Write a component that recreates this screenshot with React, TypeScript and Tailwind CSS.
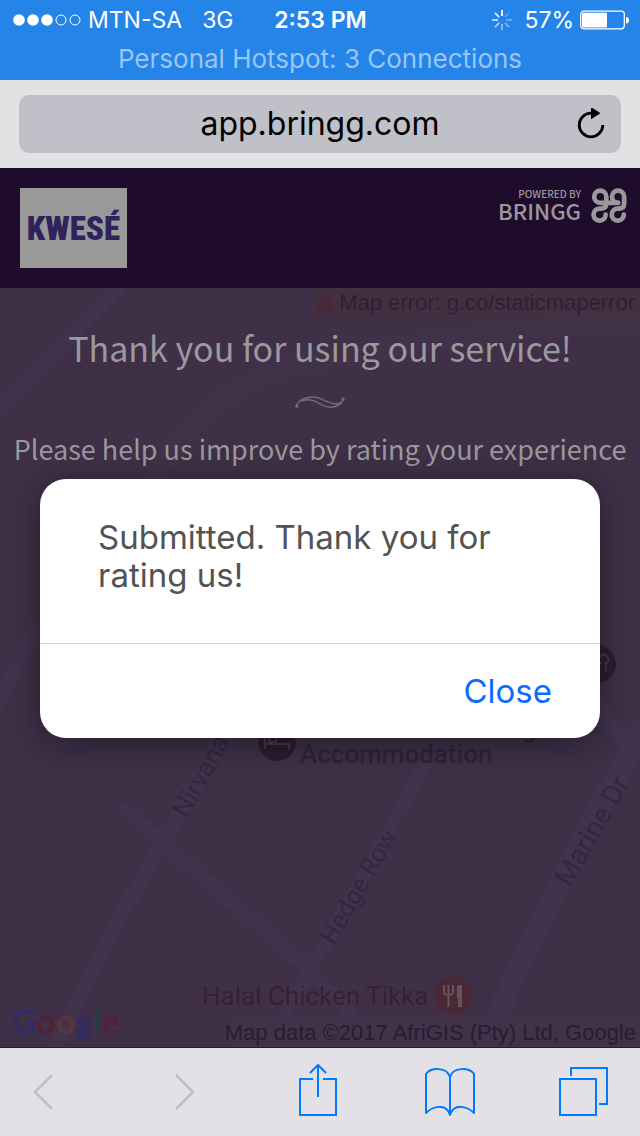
import React from "react";

function StatusBar() {
  return (
    <header className="h-20 bg-[#2484e8] text-white font-[Inter,sans-serif]">
      <div className="grid h-10 grid-cols-[1fr_auto_1fr] items-center pl-3 pr-[11px] text-[23px] leading-7">
        <div className="flex items-center">
          <svg viewBox="0 0 70 14" className="mr-[6px] h-[14px] w-[70px] shrink-0" aria-hidden="true">
            {[7, 21, 35].map((x) => (
              <circle key={x} cx={x} cy="7" r="5.8" fill="#fff" />
            ))}
            {[49, 63].map((x) => (
              <circle key={x} cx={x} cy="7" r="5" fill="none" stroke="#fff" />
            ))}
          </svg>
          <span className="whitespace-nowrap">MTN-SA</span>
          <span className="ml-5">3G</span>
        </div>
        <time className="font-semibold">2:53 PM</time>
        <div className="flex items-center justify-end">
          <svg viewBox="0 0 20 20" className="mr-3 h-5 w-5" stroke="#fff" strokeWidth="1.8" aria-hidden="true">
            {[1, 0.2, 0.35, 0.4, 0.5, 0.6, 0.75, 0.85].map((o, i) => (
              <path key={i} d="M10 0v6" opacity={o} transform={`rotate(${i * 45} 10 10)`} />
            ))}
          </svg>
          <span>57%</span>
          <svg viewBox="0 0 49 20" className="ml-[6px] h-5 w-[49px]" aria-hidden="true">
            <rect x="0.7" y="1.2" width="43.6" height="17.6" rx="3" fill="none" stroke="#fff" strokeWidth="1.2" />
            <rect x="2" y="2.8" width="25" height="14.6" rx="1" fill="#fff" />
            <path d="M46 7q3 0 3 3.2t-3 3.2z" fill="#fff" />
          </svg>
        </div>
      </div>
      <p className="text-center text-[26px] leading-[38px] text-[#9ac6f5]">Personal Hotspot: 3 Connections</p>
    </header>
  );
}

function AddressBar() {
  return (
    <div className="h-[88px] bg-[#e2e2e4] px-[19px] pt-[15px]">
      <div className="flex h-[58px] items-center rounded-[10px] bg-[#c0c0c9] pr-4">
        <input
          aria-label="Address"
          defaultValue="app.bringg.com"
          className="h-10 min-w-0 flex-1 bg-transparent pl-11 text-center font-[Inter,sans-serif] text-[32px] leading-10 text-black outline-none"
        />
        <button aria-label="Reload" className="h-8 w-7">
          <svg viewBox="0 0 28 32" className="h-8 w-7">
            <path d="M14 5.2A11.8 11.8 0 1 0 25.8 17" fill="none" stroke="#000" strokeWidth="2.8" />
            <path d="M14 -1l9.500 6.200L14 11.200z" fill="#000" />
          </svg>
        </button>
      </div>
    </div>
  );
}

function BrandHeader() {
  return (
    <div className="flex h-[120px] items-start justify-between bg-[#1f0c2d] pl-5 pr-[13px] pt-5">
      <div className="flex h-20 w-[107px] items-center justify-center bg-[#999] text-[#30235c]">
        <span className="font-['Roboto_Condensed','Liberation_Sans_Narrow','Noto_Sans',sans-serif] text-[33px] font-black leading-none">
          KWESÉ
        </span>
      </div>
      <a href="#bringg" className="flex gap-[10px] text-[#9b989c]">
        <span className="flex flex-col items-end font-['Noto_Sans_CJK_SC',sans-serif] font-medium">
          <span className="text-[10px] leading-3">POWERED BY</span>
          <span className="text-[22px] leading-5">BRINGG</span>
        </span>
        <svg viewBox="0 0 106 104" className="h-[35px] w-9" fill="none" stroke="currentColor" strokeWidth="14" strokeLinecap="round" aria-hidden="true">
          <path d="M43 79A18 18 0 1 1 25 61H30Q45 60 45 46V26A18 18 0 1 0 27 44H80" />
          <path d="M97 79A18 18 0 1 1 79 61H84Q98 60 98 46V26A18 18 0 1 0 80 44" />
        </svg>
      </a>
    </div>
  );
}

function MapBackground() {
  return (
    <svg
      viewBox="0 288 640 760"
      preserveAspectRatio="xMidYMid slice"
      className="absolute inset-0 h-full w-full font-[Roboto,sans-serif]"
      aria-label="Map"
    >
      <rect y="288" width="640" height="760" fill="#3f3048" />
      <g fill="none" stroke="#42334c">
        <path d="M122 284Q90 315 58 350T-8 414" strokeWidth="16" />
        <path d="M152 490Q205 375 325 360Q470 330 645 320" strokeWidth="22" opacity=".6" />
        <path d="M38 625L-6 708" strokeWidth="16" />
        <path d="M245 700L162 842Q112 930 86 985L50 1056" strokeWidth="15" />
        <path d="M126 810L306 967L352 1014" strokeWidth="14" strokeLinecap="round" />
        <path d="M428 760L304 982L262 1052" strokeWidth="13" />
        <path d="M646 722L560 880L480 1052" strokeWidth="22" />
        <path d="M598 700L630 750" strokeWidth="15" />
      </g>
      <path d="M313 288H640V316H313z" fill="#403040" />
      <path d="M325 292L335 311H315z" fill="#4c2636" />
      <path d="M325 298v7m0 2v2" stroke="#3f3040" strokeWidth="2" />
      <text x="635" y="310" textAnchor="end" fontSize="22" fill="#311e35" className="font-['Liberation_Sans',sans-serif]">
        Map error: g.co/staticmaperror
      </text>
      <g fill="#35263f">
        <text x="0" y="0" fontSize="26" transform="translate(187 819) rotate(-61)">Nirvana</text>
        <text x="0" y="0" fontSize="25" transform="translate(334 946) rotate(-60)">Hedge Row</text>
        <text x="0" y="0" fontSize="28" transform="translate(570 888) rotate(-60)">Marine Dr</text>
      </g>
      <circle cx="277" cy="742" r="19" fill="#2d1b31" />
      <path d="M265 733v16m0-5h24v5m-20-12h7v5h-7z" fill="none" stroke="#45354c" strokeWidth="2" />
      <circle cx="597" cy="664" r="19" fill="#2d1b31" />
      <path d="M598 657l7-3 4 6-3 3v8m-4-8h-4v8" fill="none" stroke="#45354c" strokeWidth="2" />
      <g fill="#32213a" fontSize="26" className="font-medium">
        <text x="522" y="738">g</text>
        <text x="300" y="763">Accommodation</text>
      </g>
      <text x="202" y="1005" fontSize="26" fill="#371f36">Halal Chicken Tikka</text>
      <circle cx="453" cy="995" r="19" fill="#4b2835" />
      <g fill="none" stroke="#6a525c">
        <path d="M444 985v7q0 3 4.500 3t4.500-3v-7M448.500 985v22" strokeWidth="2" />
        <path d="M460 985v22m-1-21v12" strokeWidth="4" />
      </g>
      <text x="12" y="1034" fontSize="34" className="font-['Lato',sans-serif] font-bold">
        <tspan fill="#322c62">G</tspan>
        <tspan fill="#572039">o</tspan>
        <tspan fill="#58363c">o</tspan>
        <tspan fill="#322c62">g</tspan>
        <tspan fill="#2b3a45">l</tspan>
        <tspan fill="#572039">e</tspan>
      </text>
      <path d="M230 1018H640V1048H230z" fill="#413249" />
      <text x="636" y="1040" textAnchor="end" fontSize="22" fill="#2b1a32" className="font-['Liberation_Sans',sans-serif]">
        Map data ©2017 AfriGIS (Pty) Ltd, Google
      </text>
      <path d="M0 1047.500H640" stroke="#281e30" />
    </svg>
  );
}

function RatingPage() {
  return (
    <section className="relative flex-1 overflow-hidden bg-[#3f3048] text-[#9b999b] font-['Noto_Sans_CJK_SC',sans-serif]">
      <MapBackground />
      <div className="relative flex flex-col items-center pt-9 text-center">
        <h1 className="text-[34px] leading-[48px]">Thank you for using our service!</h1>
        <svg viewBox="0 0 52 16" className="mt-[22px] h-4 w-[52px]" fill="none" stroke="#716f70" aria-hidden="true">
          <path d="M2.500 12C4 5 14 3 19 3C28 3 33 10 43 10C47 9 49 8 49.500 4.500" strokeWidth="1.400" />
          <path d="M7 7C16 4 21 7 28 11C34 14.500 43 14 48 8" strokeWidth="1.400" />
          <circle cx="2.700" cy="12.200" r="1.200" fill="#716f70" />
          <circle cx="49" cy="5" r="1.200" fill="#716f70" />
        </svg>
        <p className="mt-[19px] whitespace-nowrap text-[27px] leading-10">Please help us improve by rating your experience</p>
      </div>
    </section>
  );
}

function SubmittedDialog() {
  return (
    <div className="absolute inset-0 flex items-center justify-center px-10 font-[Inter,sans-serif]">
      <div
        role="dialog"
        aria-modal="true"
        aria-labelledby="dialog-message"
        className="w-full max-w-[560px] rounded-[26px] bg-white shadow-[0_6px_36px_rgba(0,0,0,0.4)]"
      >
        <p id="dialog-message" className="px-[58px] pb-[49px] pt-[39px] text-[33px] leading-[38px] text-[#535353]">
          Submitted. Thank you for rating us!
        </p>
        <div className="flex h-[95px] items-center justify-end border-t border-[#d5d5d7] pr-12">
          <button className="text-[33px] leading-10 text-[#0a6cff]">Close</button>
        </div>
      </div>
    </div>
  );
}

function Toolbar() {
  return (
    <nav
      aria-label="Browser"
      className="flex h-[88px] items-center justify-between bg-[#e4e1e6] pb-1 pl-[33px] pr-8 text-[#007aff]"
    >
      <button aria-label="Back" disabled className="w-11 text-[#bfbec2]">
        <svg viewBox="0 0 20 40" className="h-10 w-5" fill="none" stroke="currentColor" strokeWidth="2.500">
          <path d="M19 5L2 22L19 39" />
        </svg>
      </button>
      <button aria-label="Forward" disabled className="flex w-[50px] justify-center text-[#bfbec2]">
        <svg viewBox="0 0 20 40" className="h-10 w-5" fill="none" stroke="currentColor" strokeWidth="2.500">
          <path d="M1 5L18 22L1 39" />
        </svg>
      </button>
      <button aria-label="Share" className="flex w-[50px] justify-center">
        <svg viewBox="0 0 40 56" className="h-14 w-10" fill="none" stroke="currentColor" strokeWidth="2">
          <path d="M15 17H2V53H38V17H25M20 35V3M12 11L20 3L28 11" />
        </svg>
      </button>
      <button aria-label="Bookmarks" className="w-[50px]">
        <svg viewBox="0 0 50 56" className="h-14 w-[50px]" fill="none" stroke="currentColor" strokeWidth="2">
          <path d="M25 53V15C22 5 6 5 1 12V51C8 44 21 41 25 53C29 41 42 44 49 51V12C44 5 28 5 25 15" strokeLinejoin="round" />
        </svg>
      </button>
      <button aria-label="Tabs" className="w-[50px]">
        <svg viewBox="0 0 50 56" className="h-14 w-[50px]" fill="none" stroke="currentColor" strokeWidth="2">
          <path d="M2 17H38V53H2zM13 14V6H49V42H41" />
        </svg>
      </button>
    </nav>
  );
}

export default function App() {
  return (
    <div className="flex min-h-screen flex-col">
      <StatusBar />
      <AddressBar />
      <main className="relative flex flex-1 flex-col">
        <BrandHeader />
        <RatingPage />
        <SubmittedDialog />
      </main>
      <Toolbar />
    </div>
  );
}
